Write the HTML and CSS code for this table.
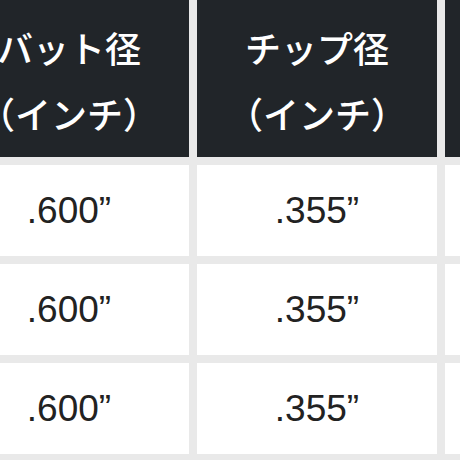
FILE: index.html
```html
<!DOCTYPE html>
<html lang="ja">
<head>
<meta charset="utf-8">
<link rel="stylesheet" href="styles.css">
</head>
<body>
<div class="viewport">
  <div class="spec-table">
    <div class="cell head">バット径<br>（インチ）</div>
    <div class="cell head">チップ径<br>（インチ）</div>
    <div class="cell head"></div>

    <div class="cell">.600”</div>
    <div class="cell">.355”</div>
    <div class="cell"></div>

    <div class="cell">.600”</div>
    <div class="cell">.355”</div>
    <div class="cell"></div>

    <div class="cell">.600”</div>
    <div class="cell">.355”</div>
    <div class="cell"></div>
  </div>
</div>
</body>
</html>
```

FILE: styles.css
```css
html, body {
  margin: 0;
  padding: 0;
  background: #ffffff;
}

.viewport {
  width: 460px;
  height: 460px;
  overflow: hidden;
}

.spec-table {
  display: grid;
  grid-template-columns: 240px 240px 240px;
  grid-template-rows: 157px 91px 91px 91px 91px;
  gap: 8px;
  width: max-content;
  margin-left: -51px;
  padding-bottom: 8px;
  background: #e9e9e9;
}

.cell {
  background: #ffffff;
  color: #222222;
  font-family: "Liberation Sans", Arial, sans-serif;
  font-size: 37px;
  display: flex;
  align-items: center;
  justify-content: center;
  text-align: center;
}

.head {
  background: #212529;
  color: #ffffff;
  font-family: "Noto Sans CJK JP", sans-serif;
  font-weight: 500;
  font-size: 36px;
  line-height: 66px;
  padding-top: 2px;
  box-sizing: border-box;
}
```
